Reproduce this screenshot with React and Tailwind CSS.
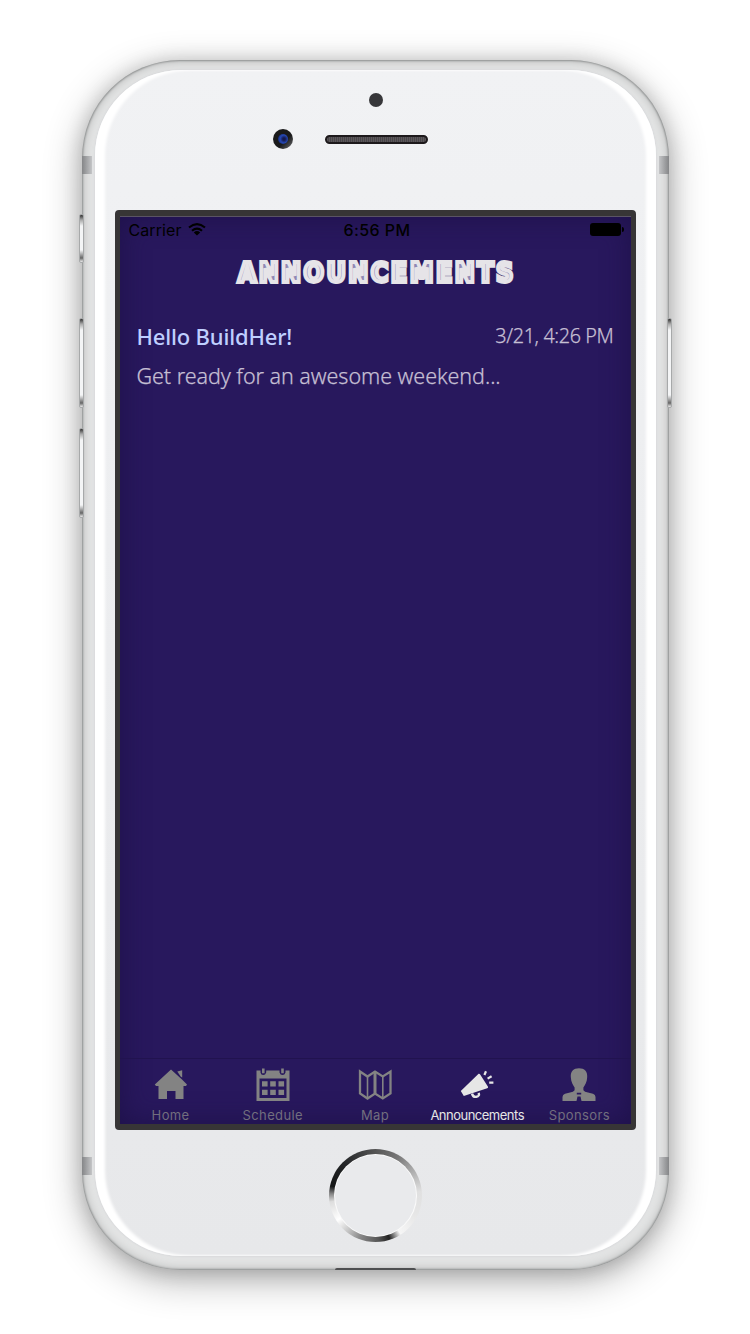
import React from "react";

function HomeIcon() {
  return (
    <svg className="h-[34px] w-[34px]" viewBox="0 0 34 34" fill="currentColor">
      <path d="M17 1.5 0.8 16.5 L2 18 H4.5 V31 H13 V23 H21.5 V31 H29.5 V18 H32 L33 16.5 28 11.5 17 1.5Z" />
      <path d="M23.3 3.4 L28.2 2.2 V9.6 L26.6 8.4 Z" />
    </svg>
  );
}

function CalendarIcon() {
  return (
    <svg className="h-[34px] w-[34px]" viewBox="0 0 34 34" fill="currentColor">
      <path
        fillRule="evenodd"
        d="M.5 2.5H4.5V4.5Q5 7 7.2 7T10.2 4.5V2.5H23.5V4.5Q24.3 7 26.5 7T29.5 4.5V2.5H33.5V33H.5ZM3.5 10.5V30H30.5V10.5Z"
      />
      <path d="M6 .5h2.6v4.8H6zM25.2 .5h2.6v4.8h-2.6zM6 13.2h5.6v5.4H6zM14.2 13.2h5.6v5.4h-5.6zM22.5 13.2h5.6v5.4h-5.6zM6 21.7h5.6v5.4H6zM14.2 21.7h5.6v5.4h-5.6zM22.5 21.7h5.6v5.4h-5.6z" />
    </svg>
  );
}

function MapIcon() {
  return (
    <svg className="h-[34px] w-[34px]" viewBox="0 0 34 34" fill="none" stroke="currentColor" strokeWidth="2.3">
      <path d="M2 3.5 9.5 8.5 17 3.5 24.8 8.5 32.5 3.5V25.5L24.8 30.5 17 25.5 9.5 30.5 2 25.5Z" />
      <path d="M9.5 8.5V30.5M24.8 8.5V30.5" strokeWidth="1.6" />
      <path d="M17 3.5V25.5" strokeWidth="3" />
    </svg>
  );
}

function MegaphoneIcon() {
  return (
    <svg className="h-[34px] w-[34px]" viewBox="0 0 34 34" fill="currentColor">
      <path d="M18.6 5.8 Q19.5 5.4 20 6.3 L28 18.8 Q28.4 20 27.2 20.3 L3.8 28 .8 23 Z" />
      <path d="M12 25.6Q13 29.4 16.4 28.8T18.7 24.8" fill="none" stroke="currentColor" strokeWidth="2.4" />
      <path d="M24.4 7 26 3.2M27.6 10.6 31.6 8.2M29.2 14.6H33.4" fill="none" stroke="currentColor" strokeWidth="2.2" />
    </svg>
  );
}

function PersonIcon() {
  return (
    <svg className="h-[34px] w-[34px]" viewBox="0 0 34 34" fill="currentColor">
      <path d="M17 .3C22.5.3 25.6 3.6 25.2 9 25 14 23 17 21.4 19.6V22.2Q22.5 24 26 24.6L31 25.8Q33.5 26.6 33.5 29V33H.5V29Q.5 26.6 3 25.8L8 24.6Q11.5 24 12.6 22.2V19.6C11 17 9 14 8.8 9 8.4 3.6 11.5.3 17 .3Z" />
      <path d="M14.8 24.8h4.4v1.6h-4.4zM15.5 28.6h3L19.5 33h-5z" fill="#28185d" />
    </svg>
  );
}

const tabs = [
  { label: "Home", Icon: HomeIcon },
  { label: "Schedule", Icon: CalendarIcon },
  { label: "Map", Icon: MapIcon },
  { label: "Announcements", Icon: MegaphoneIcon, active: true },
  { label: "Sponsors", Icon: PersonIcon },
];

function StatusBar() {
  return (
    <div className="grid h-[27px] grid-cols-3 items-center pl-[9px] pr-[7px] font-['Inter',sans-serif] text-[16px] text-black">
      <div className="flex items-center gap-[6px] tracking-[0.1px]">
        <span>Carrier</span>
        <svg className="h-[13px] w-[18px]" viewBox="0 0 18 13" fill="none" stroke="black" strokeWidth="2.1">
          <path d="M1 4.5Q9-2.3 17 4.5M4 7.7Q9 3.5 14 7.7" />
          <path d="M9 12.6 5.8 9.4Q9 6.7 12.2 9.4Z" fill="black" stroke="none" />
        </svg>
      </div>
      <div className="whitespace-nowrap pl-[2px] text-center font-medium tracking-[0.4px]">6:56 PM</div>
      <div className="flex items-center justify-end">
        <div className="h-[13px] w-[31px] rounded-[3px] bg-black" />
        <div className="ml-px h-[5px] w-[2px] rounded-r-full bg-black" />
      </div>
    </div>
  );
}

function TabBar() {
  return (
    <nav className="grid h-[66px] grid-cols-5 border-t border-[#21134f] font-['Inter',sans-serif] text-[13px] leading-4">
      {tabs.map(({ label, Icon, active }) => (
        <div
          key={label}
          className={
            active
              ? "flex flex-col items-center pt-[9px] text-[#e6e6e6]"
              : "flex flex-col items-center pt-[9px] text-[#838383]"
          }
        >
          <Icon />
          <span
            className={
              active
                ? "mt-[5px] whitespace-nowrap tracking-[-0.5px]"
                : "mt-[5px] whitespace-nowrap tracking-[0.38px] text-[#726e7e]"
            }
          >
            {label}
          </span>
        </div>
      ))}
    </nav>
  );
}

function Screen() {
  return (
    <div className="mr-px flex h-[920px] w-[521px] flex-col rounded-[4px] border-[5px] border-t-[6px] border-b-[6px] border-[#373536] bg-[#28185d]">
      <div className="flex h-[908px] flex-col shadow-[inset_0_1px_0_#5a5464,inset_0_0_28px_#1e1149]">
        <StatusBar />
        <h1 className="mt-[11px] flex h-[38px] items-center justify-center whitespace-nowrap pl-[4px] font-['DejaVu_Sans_Condensed','DejaVu_Sans',sans-serif] text-[26px] font-bold tracking-[2.9px] text-[#8f88b4] [font-stretch:condensed] [-webkit-text-stroke:3.8px_#e6e4e8]">
          ANNOUNCEMENTS
        </h1>
        <main className="flex-1 px-[17px] pt-[30px] font-['Noto_Sans',sans-serif]">
          <article>
            <div className="flex items-start justify-between">
              <h2 className="-mt-px text-[22px] font-medium leading-[30px] tracking-[-0.17px] text-[#bfcfff]">Hello BuildHer!</h2>
              <time className="text-[19.8px] font-light leading-[28px] tracking-[-0.38px] text-[#c5bfd3] [-webkit-text-stroke:0.25px_#c5bfd3]">3/21, 4:26 PM</time>
            </div>
            <p className="mt-[10px] text-[21.5px] font-light leading-[30px] tracking-[-0.05px] text-[#c5bfd3] [-webkit-text-stroke:0.25px_#c5bfd3]">
              Get ready for an awesome weekend...
            </p>
          </article>
        </main>
        <TabBar />
      </div>
    </div>
  );
}

function SideButton({ className }) {
  return (
    <div
      className={
        "absolute w-[5px] rounded-[2px] border border-[#a7a9aa] bg-[linear-gradient(180deg,#333_0,#aaa_5px,#f4f5f6_11px,#f4f5f6_calc(100%-12px),#666_calc(100%-4px),#eee_100%)] " +
        className
      }
    />
  );
}

function HomeButton() {
  return (
    <div className="mt-[19px] flex h-[93px] w-[93px] items-center justify-center rounded-full bg-[conic-gradient(from_0deg,#555,#777_30deg,#aaa_55deg,#e0e0e0_85deg,#e6e6e6_115deg,#f6f6f6_147deg,#222_162deg,#555_176deg,#888_200deg,#ccc_220deg,#fff_237deg,#ddd_262deg,#888_272deg,#151617_282deg,#222426_315deg,#555)]">
      <div className="h-[81px] w-[81px] rounded-full bg-[#e9eaec] shadow-[0_0_0_1px_#fafafa]" />
    </div>
  );
}

export default function App() {
  return (
    <div className="h-[1334px] w-[750px] overflow-hidden bg-white pl-[82px] pt-[60px]">
      <div className="relative h-[1210px] w-[587px] rounded-[98px] bg-[#e3e4e4] px-[13px] pb-[14px] pt-[10px] shadow-[0_10px_38px_rgba(0,0,0,0.3),0_2px_20px_rgba(0,0,0,0.18),inset_0_0_2px_1px_#8f9191,inset_0_0_8px_2px_#bfc0c0]">
        <SideButton className="left-[-3px] top-[154px] h-[49px]" />
        <SideButton className="left-[-3px] top-[258px] h-[90px]" />
        <SideButton className="left-[-3px] top-[368px] h-[90px]" />
        <SideButton className="right-[-3px] top-[258px] h-[90px]" />
        <div className="absolute left-0 top-[96px] h-[18px] w-[10px] bg-linear-to-r from-[#858688] to-[#c4c5c7]" />
        <div className="absolute right-0 top-[96px] h-[18px] w-[10px] bg-linear-to-l from-[#858688] to-[#c4c5c7]" />
        <div className="absolute left-0 top-[1097px] h-[18px] w-[10px] bg-linear-to-r from-[#858688] to-[#c4c5c7]" />
        <div className="absolute right-0 top-[1097px] h-[18px] w-[10px] bg-linear-to-l from-[#858688] to-[#c4c5c7]" />
        <div className="flex h-[1186px] w-[561px] flex-col items-center rounded-[86px] bg-linear-to-b from-[#f1f2f4] to-[#e7e8ea] shadow-[0_0_2px_1px_#d9dadc,inset_10px_0_3px_#fff,inset_-10px_0_3px_#fff]">
          <div className="flex h-[140px] flex-col items-center pt-[23px]">
            <div className="h-[14px] w-[14px] rounded-full bg-[#37373a]" />
            <div className="mt-[22px] flex w-[206px] items-center gap-[32px]">
              <div className="flex h-[20px] w-[20px] items-center justify-center rounded-full bg-linear-to-br from-[#1a1a1b] from-60% to-[#77787b]">
                <div className="h-[10px] w-[10px] rounded-full bg-[radial-gradient(circle_at_60%_50%,#14184e_15%,#2648b4_50%,#172b70_80%)]" />
              </div>
              <div className="h-[9px] w-[103px] rounded-full border-2 border-[#1d191b] bg-[repeating-linear-gradient(90deg,#5c585b_0_1px,#484447_1px_2px)]" />
            </div>
          </div>
          <Screen />
          <HomeButton />
        </div>
        <div className="absolute bottom-0 left-[253px] h-[2px] w-[81px] rounded-t-full bg-[#4e4f50]" />
      </div>
    </div>
  );
}
